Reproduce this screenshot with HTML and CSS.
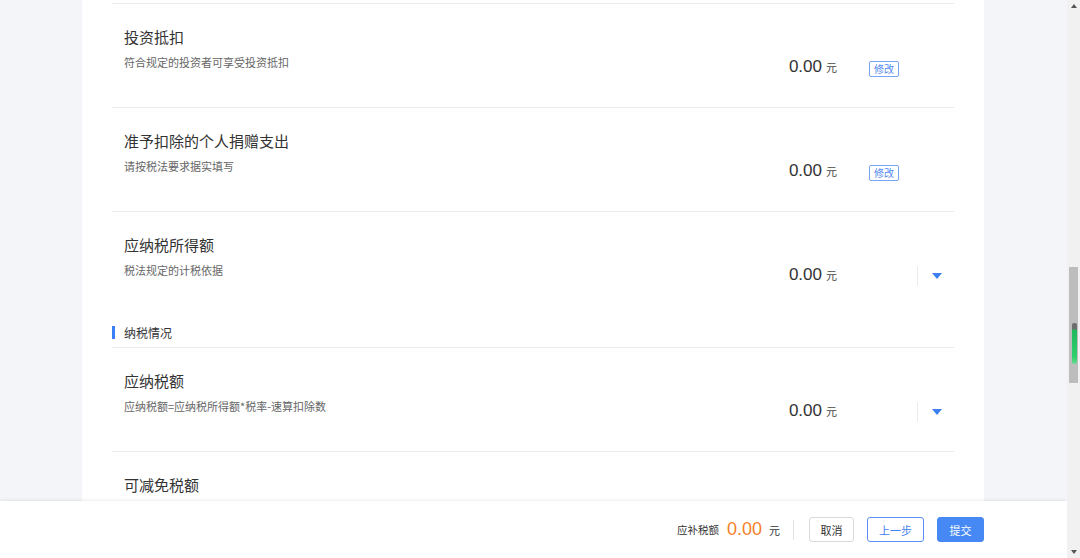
FILE: index.html
```html
<!DOCTYPE html>
<html lang="zh-CN">
<head>
<meta charset="utf-8">
<title>个人所得税申报</title>
<link rel="stylesheet" href="styles.css">
</head>
<body>
<div class="app">
  <div class="main">
    <div class="scroll-area">
      <div class="panel">
        <div class="row-cut"></div>
        <div class="row">
          <div class="row-text">
            <div class="row-title">投资抵扣</div>
            <div class="row-desc">符合规定的投资者可享受投资抵扣</div>
          </div>
          <div class="row-value"><span class="amount">0.00</span><span class="unit">元</span></div>
          <div class="row-action"><span class="btn-edit">修改</span></div>
        </div>
        <div class="row">
          <div class="row-text">
            <div class="row-title">准予扣除的个人捐赠支出</div>
            <div class="row-desc">请按税法要求据实填写</div>
          </div>
          <div class="row-value"><span class="amount">0.00</span><span class="unit">元</span></div>
          <div class="row-action"><span class="btn-edit">修改</span></div>
        </div>
        <div class="row row--flush">
          <div class="row-text">
            <div class="row-title">应纳税所得额</div>
            <div class="row-desc">税法规定的计税依据</div>
          </div>
          <div class="row-value"><span class="amount">0.00</span><span class="unit">元</span></div>
          <div class="row-action row-action--drop"><span class="drop-sep"></span><span class="caret"></span></div>
        </div>
        <div class="section-head"><span class="section-bar"></span><span class="section-title">纳税情况</span></div>
        <div class="row">
          <div class="row-text">
            <div class="row-title">应纳税额</div>
            <div class="row-desc">应纳税额=应纳税所得额*税率-速算扣除数</div>
          </div>
          <div class="row-value"><span class="amount">0.00</span><span class="unit">元</span></div>
          <div class="row-action row-action--drop"><span class="drop-sep"></span><span class="caret"></span></div>
        </div>
        <div class="row">
          <div class="row-text">
            <div class="row-title">可减免税额</div>
            <div class="row-desc">&nbsp;</div>
          </div>
        </div>
      </div>
    </div>
    <div class="footer">
      <span class="due-label">应补税额</span>
      <span class="due-amount">0.00</span>
      <span class="due-unit">元</span>
      <span class="footer-sep"></span>
      <button class="btn btn-default">取消</button>
      <button class="btn btn-outline">上一步</button>
      <button class="btn btn-primary">提交</button>
    </div>
  </div>
  <div class="scrollbar">
    <span class="sb-arrow sb-up"></span>
    <span class="sb-track"></span>
    <span class="sb-thumb"></span>
    <span class="sb-arrow sb-down"></span>
  </div>
</div>
</body>
</html>
```
FILE: styles.css
```css
* { box-sizing: border-box; }
html, body { margin: 0; padding: 0; }
body {
  width: 1080px;
  height: 558px;
  overflow: hidden;
  font-family: "Noto Sans CJK SC", "Noto Sans", sans-serif;
  color: #333;
  background: #f4f5f9;
}
.app {
  display: grid;
  grid-template-columns: 1fr 13px;
  height: 558px;
}
.main {
  display: flex;
  flex-direction: column;
  height: 558px;
}
.scroll-area {
  height: 501px;
  overflow: hidden;
  background: #f4f5f9;
  padding-left: 82px;
}
.panel {
  width: 902px;
  min-height: 501px;
  background: #fff;
  padding: 0 30px;
}
.row-cut {
  height: 4px;
  border-bottom: 1px solid #ebebeb;
}
.row {
  display: flex;
  height: 104px;
  padding-left: 12px;
  border-bottom: 1px solid #ebebeb;
}
.row--flush { border-bottom: none; height: 103px; }
.row-text {
  flex: 1;
  padding-top: 24px;
}
.row-title {
  font-size: 15px;
  line-height: 18px;
  color: #333;
}
.row-desc {
  margin-top: 9px;
  font-size: 11px;
  line-height: 14px;
  color: #666;
}
.row-value {
  display: flex;
  align-items: baseline;
  padding-top: 51px;
  height: 75px;
  line-height: 24px;
}
.amount {
  font-family: "Liberation Sans", Arial, sans-serif;
  font-size: 17px;
  color: #333;
}
.unit {
  margin-left: 4px;
  font-size: 11px;
  color: #444;
}
.row-action {
  display: flex;
  align-items: flex-start;
  width: 117px;
  padding-top: 57px;
  padding-left: 32px;
}
.btn-edit {
  display: block;
  height: 16px;
  padding: 0 4px;
  border: 1px solid #78a5f6;
  border-radius: 2px;
  font-size: 10px;
  line-height: 14px;
  color: #4f88f2;
}
.row-action--drop {
  align-items: center;
  padding-top: 54px;
  padding-left: 80px;
  height: 74px;
}
.drop-sep {
  width: 1px;
  height: 20px;
  background: #ececec;
}
.caret {
  margin-left: 14px;
  width: 0;
  height: 0;
  border-left: 5px solid transparent;
  border-right: 5px solid transparent;
  border-top: 6px solid #3c7ff2;
}
.section-head {
  display: flex;
  align-items: center;
  height: 33px;
  padding-top: 3px;
  border-bottom: 1px solid #ebebeb;
}
.section-bar {
  width: 3px;
  height: 13px;
  background: #3a80f6;
}
.section-title {
  margin-left: 9px;
  font-size: 12px;
  line-height: 14px;
  color: #333;
}
.footer {
  height: 57px;
  background: #fff;
  box-shadow: 0 -1px 3px rgba(0, 0, 0, 0.08);
  display: flex;
  align-items: center;
  justify-content: flex-end;
  padding-right: 83px;
  position: relative;
}
.due-label {
  font-size: 10.5px;
  color: #333;
}
.due-amount {
  margin-left: 8px;
  font-family: "Liberation Sans", Arial, sans-serif;
  font-size: 18px;
  color: #f5812a;
}
.due-unit {
  margin-left: 7px;
  font-size: 11px;
  color: #333;
}
.footer-sep {
  margin-left: 13px;
  width: 1px;
  height: 20px;
  background: #e2e2e2;
}
.btn {
  height: 25px;
  margin-left: 13px;
  border-radius: 3px;
  font-family: "Noto Sans CJK SC", sans-serif;
  font-size: 11px;
  padding: 0;
  cursor: pointer;
}
.footer-sep + .btn { margin-left: 15px; }
.btn-default {
  width: 45px;
  border: 1px solid #d9d9d9;
  background: #fff;
  color: #333;
}
.btn-outline {
  width: 57px;
  border: 1px solid #5b8ff5;
  background: #fff;
  color: #3f7ff0;
}
.btn-primary {
  width: 47px;
  border: 1px solid #4689f5;
  background: #4689f5;
  color: #fff;
}
.scrollbar {
  position: relative;
  background: #f1f1f1;
  height: 558px;
}
.sb-arrow {
  position: absolute;
  left: 4px;
  width: 0;
  height: 0;
  border-left: 3px solid transparent;
  border-right: 3px solid transparent;
}
.sb-up { top: 4px; border-bottom: 4px solid #555; }
.sb-down { bottom: 4px; border-top: 4px solid #555; }
.sb-track {
  position: absolute;
  left: 2px;
  top: 267px;
  width: 9px;
  height: 116px;
  background: #bdbdbd;
}
.sb-thumb {
  position: absolute;
  left: 5px;
  top: 323px;
  width: 5px;
  height: 41px;
  border-radius: 2px;
  background: linear-gradient(#6e6e6e 0, #6e6e6e 6px, #1fb85b 7px, #2fd06e 34px, #6ad98f 41px);
}
```
